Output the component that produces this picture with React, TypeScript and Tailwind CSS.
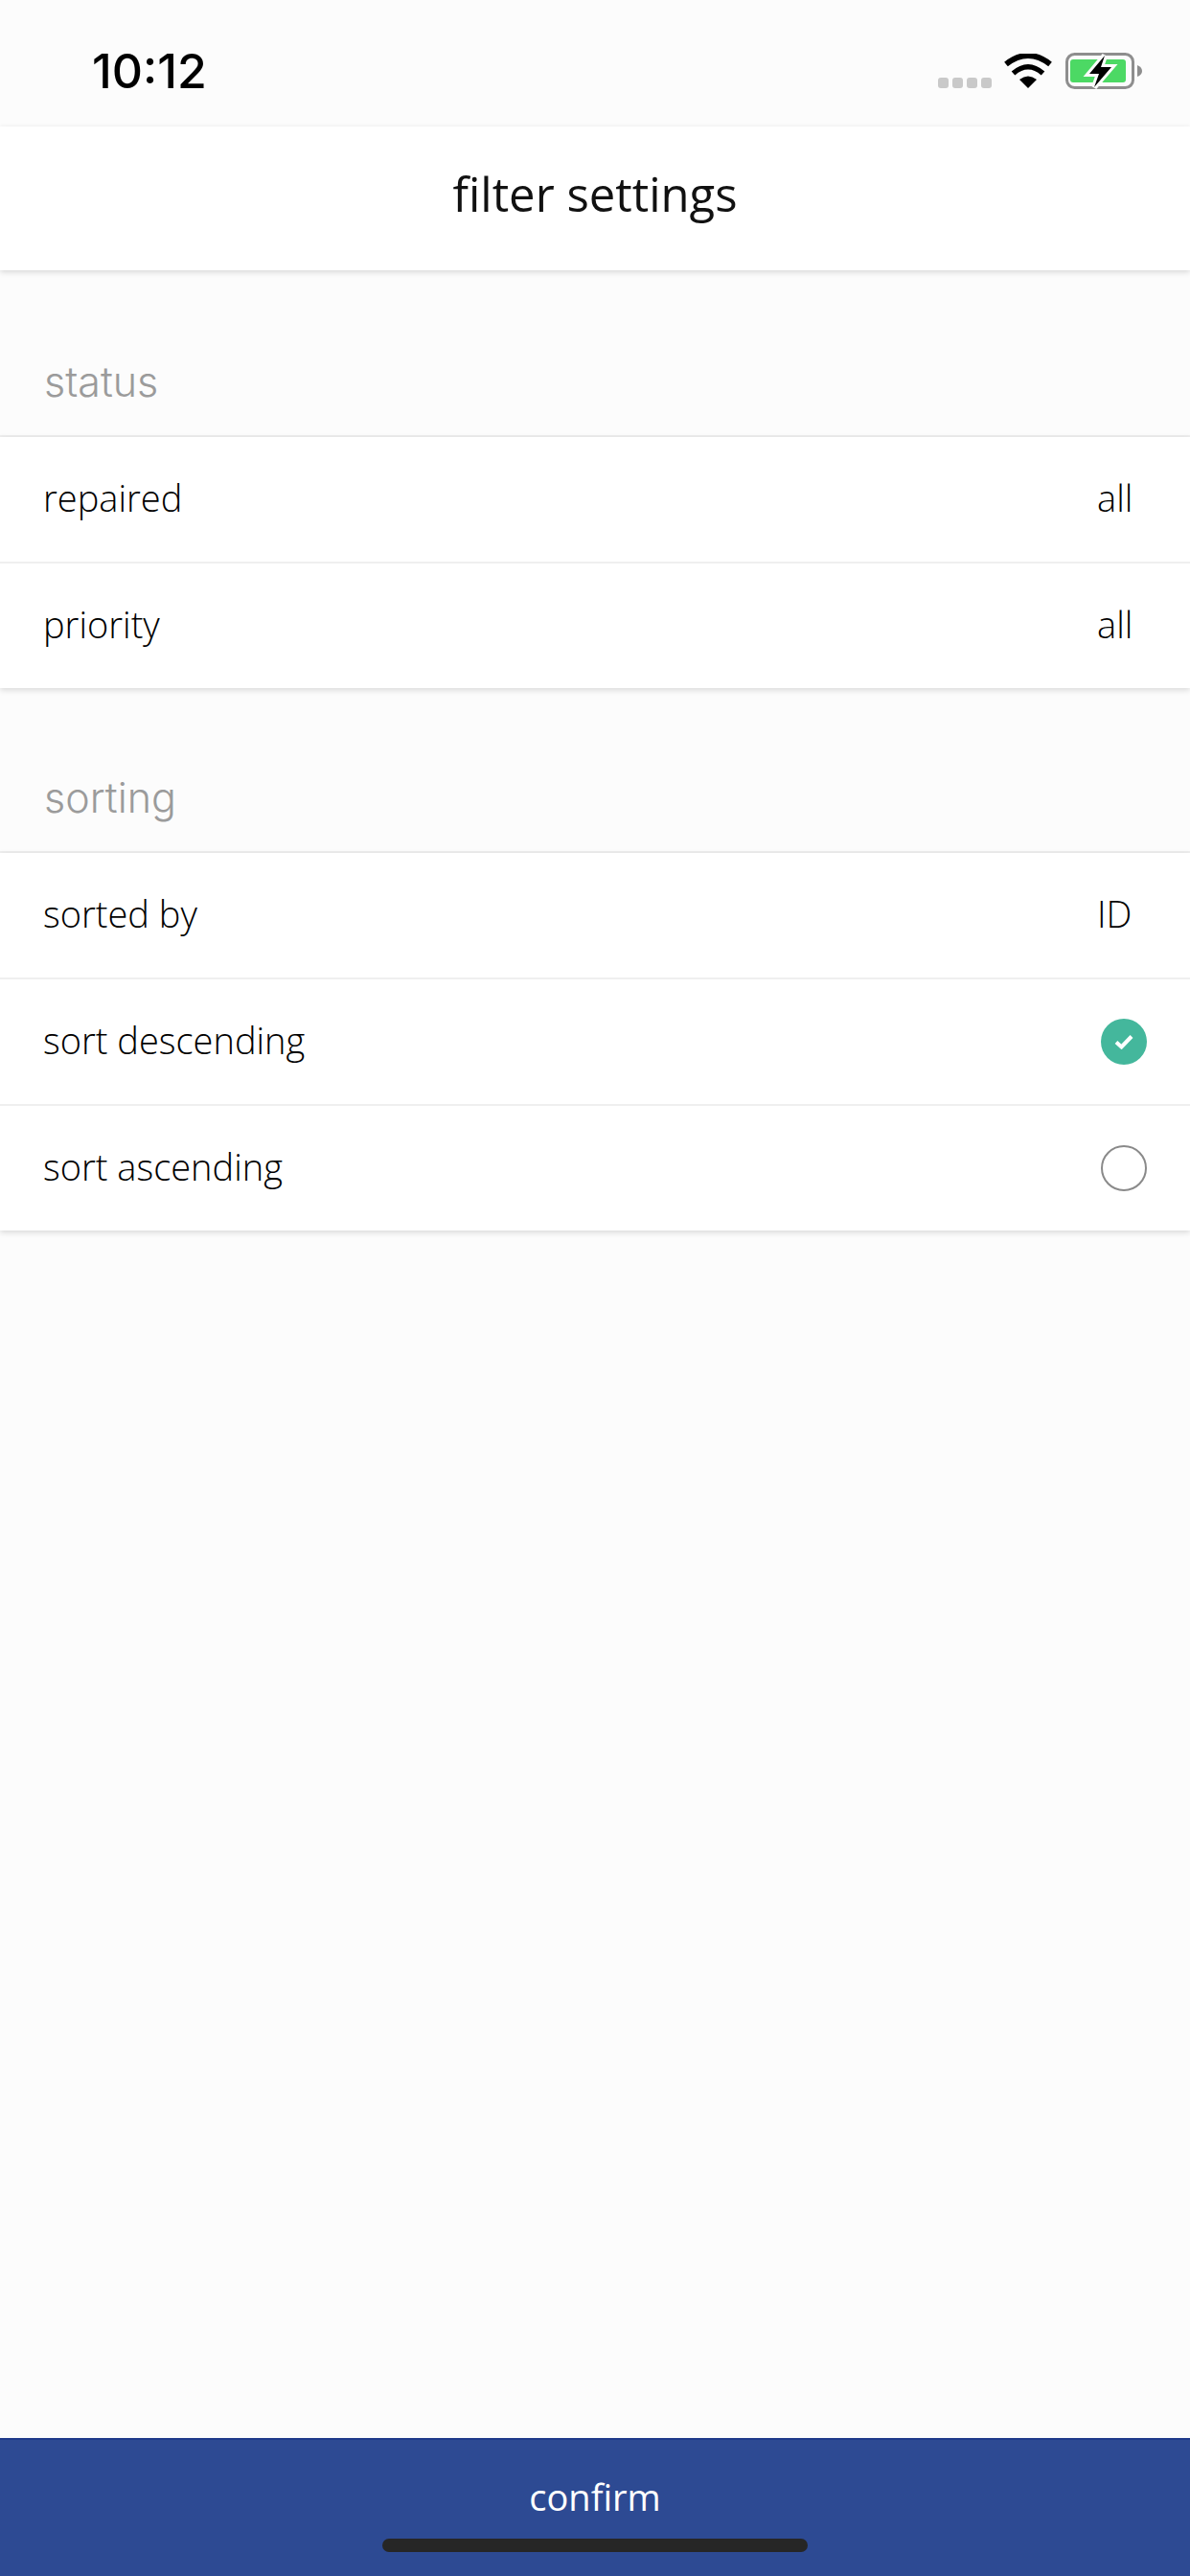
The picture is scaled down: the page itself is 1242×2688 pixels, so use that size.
function StatusBar() {
    return (
        <div className="h-[132px] bg-[#fcfcfc] flex items-center justify-between pl-[96px] pr-[50px] pt-[16px] shrink-0">
            <span className="text-[50px] leading-[60px] font-medium text-black font-['Inter',sans-serif]">10:12</span>
            <div className="flex items-end">
                {/* signal dots */}
                <div className="flex gap-[4px] mb-[1px] mr-[13px]">
                    {[1, 2, 3, 4].map((i) => (
                        <div key={i} className="w-[11px] h-[11px] rounded-[3px] bg-[#c9c9c9]" />
                    ))}
                </div>
                <svg width="50" height="36" viewBox="0 0 50 36" className="mb-[1px] mr-[14px]">
                    <path d="M25 36 L16 27 Q25 20 34 27 Z" fill="#000" />
                    <path d="M9.5 20.5 Q25 7 40.5 20.5" fill="none" stroke="#000" strokeWidth="5.5" />
                    <path d="M2 11 Q25 -7 48 11" fill="none" stroke="#000" strokeWidth="6" />
                </svg>
                <svg width="80" height="38" viewBox="0 0 80 38">
                    <rect x="1.5" y="1.5" width="69" height="35" rx="8" fill="none" stroke="#8e8e8e" strokeWidth="3" />
                    <rect x="5" y="7" width="58" height="24" rx="3" fill="#4cd964" />
                    <path d="M75 13 Q80 15 80 19 Q80 23 75 25 Z" fill="#8e8e8e" />
                    <path d="M41 3 L25 22 L35 22 L30 36 L48 15 L37 15 Z" fill="#000" stroke="#fcfcfc" strokeWidth="6" strokeLinejoin="miter" />
                    <path d="M41 3 L25 22 L35 22 L30 36 L48 15 L37 15 Z" fill="#000" />
                </svg>
            </div>
        </div>
    );
}

function Row({ label, value, check, last }: { label: string; value?: string; check?: "on" | "off"; last?: boolean }) {
    return (
        <div className={`flex items-center justify-between pl-[45px] pr-[45px] ${last ? "h-[130px]" : "h-[132px] border-b-2 border-[#efefef]"}`}>
            <span className="text-[38px] text-black font-['Open_Sans',sans-serif] font-light mt-[-4px]">{label}</span>
            {value && <span className="w-[52px] text-[38px] text-black font-['Open_Sans',sans-serif] font-light mt-[-4px]">{value}</span>}
            {check === "on" && (
                <div className="w-[48px] h-[48px] rounded-full bg-[#44b79c] flex items-center justify-center">
                    <svg width="20" height="16" viewBox="0 0 20 16">
                        <path d="M2 8.5 L7.5 13.5 L18 2.5" fill="none" stroke="#fff" strokeWidth="4" />
                    </svg>
                </div>
            )}
            {check === "off" && <div className="w-[48px] h-[48px] rounded-full border-2 border-[#8a8a8a]" />}
        </div>
    );
}

function Section({ title, children }: { title: string; children: React.ReactNode }) {
    return (
        <div>
            <div className="h-[172px] flex items-end pl-[46px] pb-[31px] border-b-2 border-[#efefef]">
                <span className="text-[43px] leading-[50px] text-[#9b9b9b] font-['Inter',sans-serif] font-light">{title}</span>
            </div>
            <div className="bg-white shadow-[0_2px_6px_rgba(0,0,0,0.15)]">{children}</div>
        </div>
    );
}

export default function App() {
    return (
        <div className="relative w-[1242px] h-[2688px] flex flex-col bg-[#fcfcfc] overflow-hidden">
            <StatusBar />

            {/* 헤더 */}
            <div className="relative h-[150px] bg-white flex items-center justify-center pb-[9px] shadow-[0_2px_6px_rgba(0,0,0,0.15)] shrink-0">
                <span className="text-[49px] text-[#111] font-['Open_Sans',sans-serif]">filter settings</span>
            </div>

            <div className="flex-1 pt-[2px]">
                <Section title="status">
                    <Row label="repaired" value="all" />
                    <Row label="priority" value="all" last />
                </Section>
                <Section title="sorting">
                    <Row label="sorted by" value="ID" />
                    <Row label="sort descending" check="on" />
                    <Row label="sort ascending" check="off" last />
                </Section>
            </div>

            {/* confirm button */}
            <div className="h-[144px] bg-[#2d4a93] border-t-2 border-[#1f3a8a] flex justify-center pt-[33px] shrink-0">
                <span className="text-[38px] leading-[52px] text-white font-['Open_Sans',sans-serif]">confirm</span>
            </div>
            <div className="absolute left-[399px] bottom-[25px] w-[444px] h-[14px] rounded-full bg-[#262626]" />
        </div>
    );
}
